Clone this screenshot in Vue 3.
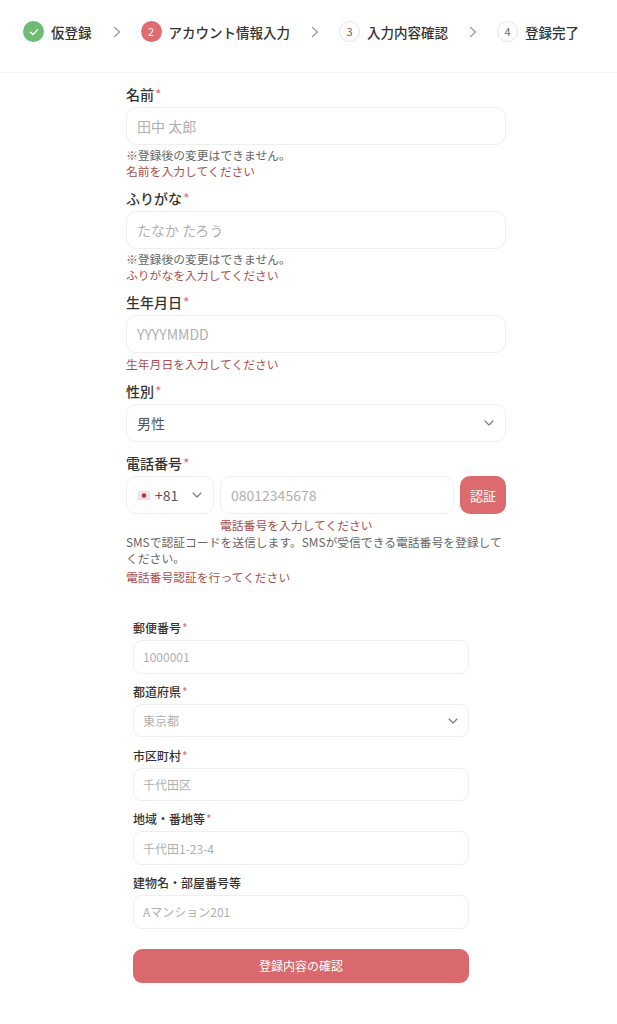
<script setup>
const steps = [
  { label: '仮登録', state: 'done' },
  { label: 'アカウント情報入力', num: 2, state: 'active' },
  { label: '入力内容確認', num: 3, state: 'todo' },
  { label: '登録完了', num: 4, state: 'todo' },
]

const addressFields = [
  { label: '郵便番号', placeholder: '1000001', required: true },
  { label: '都道府県', value: '東京都', required: true, select: true },
  { label: '市区町村', placeholder: '千代田区', required: true },
  { label: '地域・番地等', placeholder: '千代田1-23-4', required: true },
  { label: '建物名・部屋番号等', placeholder: 'Aマンション201', required: false },
]
</script>

<template>
  <div class="page">
    <header class="stepper">
      <template v-for="(step, i) in steps" :key="step.label">
        <div class="step">
          <span class="circle" :class="step.state">
            <svg v-if="step.state === 'done'" width="12" height="12" viewBox="0 0 12 12" fill="none">
              <path d="M2.5 6.3 5 8.6 9.5 3.6" stroke="#fff" stroke-width="1.4" stroke-linecap="round" stroke-linejoin="round" />
            </svg>
            <template v-else>{{ step.num }}</template>
          </span>
          <span class="step-label">{{ step.label }}</span>
        </div>
        <svg v-if="i < steps.length - 1" class="arrow" width="8" height="12" viewBox="0 0 8 12" fill="none">
          <path d="M1.5 1.5 6.5 6 1.5 10.5" stroke="#999" stroke-width="1.2" stroke-linecap="round" stroke-linejoin="round" />
        </svg>
      </template>
    </header>

    <form class="form" @submit.prevent>
      <div class="field">
        <div class="label">名前<span class="req">*</span></div>
        <div class="box placeholder">田中 太郎</div>
        <p class="hint">※登録後の変更はできません。</p>
        <p class="error">名前を入力してください</p>
      </div>

      <div class="field">
        <div class="label">ふりがな<span class="req">*</span></div>
        <div class="box placeholder">たなか たろう</div>
        <p class="hint">※登録後の変更はできません。</p>
        <p class="error">ふりがなを入力してください</p>
      </div>

      <div class="field">
        <div class="label">生年月日<span class="req">*</span></div>
        <div class="box placeholder">YYYYMMDD</div>
        <p class="error">生年月日を入力してください</p>
      </div>

      <div class="field gender">
        <div class="label">性別<span class="req">*</span></div>
        <div class="box select">
          男性
          <svg class="chev" width="12" height="8" viewBox="0 0 12 8" fill="none">
            <path d="M2 2 6 6 10 2" stroke="#777" stroke-width="1.1" stroke-linecap="round" stroke-linejoin="round" />
          </svg>
        </div>
      </div>

      <div class="field">
        <div class="label">電話番号<span class="req">*</span></div>
        <div class="phone-row">
          <div class="box country">
            <svg class="flag" width="12" height="9" viewBox="0 0 12 9">
              <rect width="12" height="9" fill="#e6e6e6" />
              <circle cx="6" cy="4.5" r="2.2" fill="#c8243c" />
            </svg>
            <span>+81</span>
            <svg class="chev" width="12" height="8" viewBox="0 0 12 8" fill="none">
              <path d="M2 2 6 6 10 2" stroke="#777" stroke-width="1.1" stroke-linecap="round" stroke-linejoin="round" />
            </svg>
          </div>
          <div class="phone-col">
            <div class="box placeholder">08012345678</div>
          </div>
          <button type="button" class="verify">認証</button>
        </div>
        <p class="error phone-error">電話番号を入力してください</p>
        <p class="hint">SMSで認証コードを送信します。SMSが受信できる電話番号を登録してください。</p>
        <p class="error sms-error">電話番号認証を行ってください</p>
      </div>

      <div class="address">
        <div v-for="f in addressFields" :key="f.label" class="addr-field">
          <div class="addr-label">{{ f.label }}<span v-if="f.required" class="req">*</span></div>
          <div class="addr-box" :class="{ 'is-select': f.select }">
            {{ f.placeholder || f.value }}
            <svg v-if="f.select" class="chev" width="12" height="8" viewBox="0 0 12 8" fill="none">
              <path d="M2 2 6 6 10 2" stroke="#777" stroke-width="1.1" stroke-linecap="round" stroke-linejoin="round" />
            </svg>
          </div>
        </div>
        <button type="button" class="submit">登録内容の確認</button>
      </div>
    </form>
  </div>
</template>

<style scoped>
.page {
  width: 617px;
  height: 1024px;
  background: #fff;
  color: #333;
  font-family: "Noto Sans CJK JP", "Noto Sans", sans-serif;
  overflow: hidden;
}
.stepper {
  height: 73px;
  box-sizing: border-box;
  padding: 21px 0 0 23px;
  display: flex;
  align-items: flex-start;
  border-bottom: 1px solid #f4f4f4;
}
.step {
  display: flex;
  align-items: center;
  gap: 7px;
  height: 21px;
}
.arrow {
  margin: 5px 20px 0 21px;
}
.circle {
  width: 21px;
  height: 21px;
  box-sizing: border-box;
  border-radius: 50%;
  display: flex;
  align-items: center;
  justify-content: center;
  font-size: 11px;
  line-height: 1;
}
.circle.done {
  background: #6dbb75;
}
.circle.active {
  background: #e06c70;
  color: #fff;
}
.circle.todo {
  border: 1px solid #e4e4e4;
  color: #666;
}
.step-label {
  font-size: 13.5px;
  font-weight: 500;
  color: #333;
  white-space: nowrap;
}
.form {
  width: 380px;
  margin-left: 126px;
  padding-top: 11px;
}
.field {
  margin-bottom: 9px;
}
.field.gender {
  margin-bottom: 11px;
}
.label {
  font-size: 14px;
  font-weight: 500;
  line-height: 20px;
  margin-bottom: 3px;
  color: #333;
}
.req {
  color: #e06c70;
  font-weight: 400;
  margin-left: 1px;
}
.box {
  height: 38px;
  box-sizing: border-box;
  border: 1px solid #efefef;
  border-radius: 10px;
  padding: 0 10px;
  display: flex;
  align-items: center;
  font-size: 14px;
  color: #555;
}
.placeholder {
  color: #b0b0b0;
}
.select {
  justify-content: space-between;
}
.hint,
.error {
  margin: 0;
  font-size: 11.8px;
  line-height: 16px;
}
.hint {
  color: #666;
  margin-top: 2px;
}
.hint + .error {
  margin-top: 0;
}
.error {
  color: #a8504e;
  margin-top: 3px;
}
.phone-row {
  display: flex;
  gap: 6px;
}
.country {
  width: 88px;
  padding: 0 10px 0 11px;
  gap: 5px;
  flex-shrink: 0;
}
.country .chev {
  margin-left: auto;
}
.flag {
  flex-shrink: 0;
}
.phone-col {
  flex: 1;
}
.verify {
  width: 46px;
  height: 38px;
  padding: 0;
  border: none;
  border-radius: 10px;
  background: #dc6b6e;
  color: #fff;
  font-family: inherit;
  font-size: 13px;
}
.phone-error {
  margin-left: 94px;
  margin-top: 3px;
}
.phone-error + .hint {
  margin-top: 1px;
}
.hint + .sms-error {
  margin-top: 3px;
}
.address {
  width: 336px;
  margin-left: 7px;
  margin-top: 35px;
}
.addr-field {
  margin-bottom: 10.25px;
}
.addr-label {
  font-size: 12px;
  font-weight: 500;
  line-height: 16px;
  margin-bottom: 4px;
  color: #333;
}
.addr-box {
  height: 33.5px;
  box-sizing: border-box;
  border: 1px solid #efefef;
  border-radius: 9px;
  padding: 0 9px;
  display: flex;
  align-items: center;
  font-size: 12px;
  color: #b0b0b0;
}
.addr-box.is-select {
  justify-content: space-between;
}
.submit {
  display: block;
  width: 100%;
  height: 34px;
  margin-top: 20px;
  border: none;
  border-radius: 9px;
  background: #d9696d;
  color: #fff;
  font-family: inherit;
  font-size: 12px;
}
</style>
